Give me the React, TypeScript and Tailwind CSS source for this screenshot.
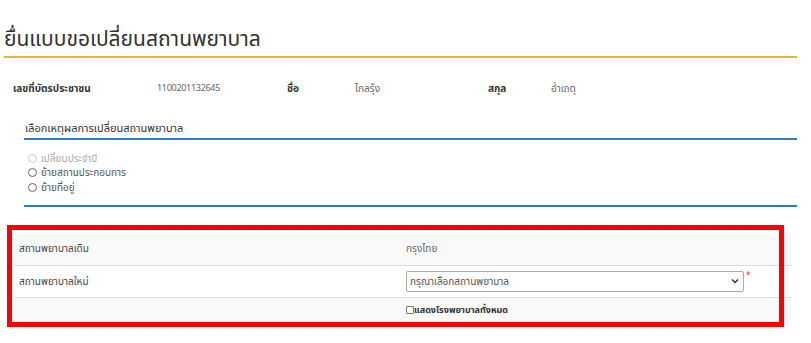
import React from "react";

const font = { fontFamily: '"Noto Sans", "Noto Sans Thai", Tahoma, sans-serif' };

export default function App() {
  const reasons = [
    { label: "เปลี่ยนประจำปี", disabled: true },
    { label: "ย้ายสถานประกอบการ", disabled: false },
    { label: "ย้ายที่อยู่", disabled: false },
  ];

  return (
    <div className="w-[811px] h-[343px] bg-white overflow-hidden" style={font}>
      <div className="ml-[4px] w-[793px]">
        {/* Title */}
        <h1 className="pt-[24px] h-[56px] text-[21px] leading-[28px] text-[#333]">
          ยื่นแบบขอเปลี่ยนสถานพยาบาล
        </h1>
        <div className="h-[2px] bg-[#e9b23c]" />

        {/* Person info */}
        <div className="flex items-center h-[30px] mt-[15px] pl-[9px] text-[10px]">
          <div className="w-[144px] font-bold text-[#333]">เลขที่บัตรประชาชน</div>
          <div className="w-[130px] text-[9px] tracking-[-0.3px] text-[#666]">1100201132645</div>
          <div className="w-[68px] font-bold text-[#333]">ชื่อ</div>
          <div className="w-[133px] text-[#666]">ไกลรุ้ง</div>
          <div className="w-[63px] font-bold text-[#333]">สกุล</div>
          <div className="text-[#666]">อ่ำเถตุ</div>
        </div>

        {/* Reason */}
        <div className="ml-[20px] mt-[17px]">
          <div className="text-[11px] leading-[16px] pl-[1px] text-[#333]">
            เลือกเหตุผลการเปลี่ยนสถานพยาบาล
          </div>
          <div className="h-[2px] mt-[2px] bg-[#2f7bc0]" />
          <div className="flex flex-col pt-[11px] pl-[4px] gap-0">
            {reasons.map((r) => (
              <label
                key={r.label}
                className={`flex items-center gap-[4px] h-[14.5px] text-[10px] ${r.disabled ? "text-[#aaa]" : "text-[#555]"}`}
              >
                <span
                  className={`inline-block w-[9px] h-[9px] rounded-full border ${r.disabled ? "border-[#ccc]" : "border-[#666]"}`}
                />
                {r.label}
              </label>
            ))}
          </div>
          <div className="h-[2px] mt-[10px] bg-[#2f7bc0]" />
        </div>

        {/* Hospital table */}
        <div className="relative mt-[26px]">
          <div className="ml-[10px] mr-[6px] text-[10px] text-[#444]">
            <div className="flex items-center h-[33px] bg-[#f9f9f9] border-b border-[#ddd]">
              <div className="w-[392px] pl-[5px]">สถานพยาบาลเดิม</div>
              <div className="text-[#666]">กรุงไทย</div>
            </div>
            <div className="flex items-center h-[32px] bg-white border-b border-[#ddd]">
              <div className="w-[392px] pl-[5px]">สถานพยาบาลใหม่</div>
              <div className="flex items-start">
                <div className="flex items-center justify-between w-[338px] h-[21px] border border-[#aaa] rounded-[2px] pl-[3px] pr-[4px] text-[#555]">
                  <span>กรุณาเลือกสถานพยาบาล</span>
                  <svg width="8" height="6" viewBox="0 0 8 6">
                    <path d="M1 1.5 L4 4.5 L7 1.5" fill="none" stroke="#333" strokeWidth="1.5" />
                  </svg>
                </div>
                <span className="ml-[2px] -mt-[2px] text-[#e33] text-[8px]">*</span>
              </div>
            </div>
            <div className="flex items-center h-[25px] bg-[#f9f9f9]">
              <div className="w-[392px]" />
              <label className="flex items-center text-[9px] font-bold text-[#333]">
                <span className="inline-block w-[8px] h-[8px] border border-[#777] rounded-[1px] bg-white" />
                แสดงโรงพยาบาลทั้งหมด
              </label>
            </div>
          </div>
          {/* annotation overlay */}
          <div className="absolute left-[3px] top-[-8px] w-[777px] h-[102px] border-[5px] border-[#ff0000] pointer-events-none" />
        </div>
      </div>
    </div>
  );
}
